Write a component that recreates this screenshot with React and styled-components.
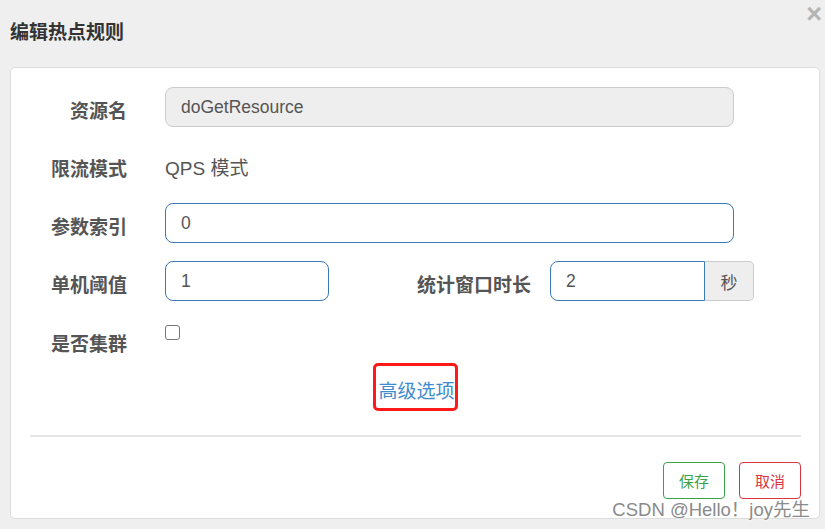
import React from "react"
import styled, { createGlobalStyle } from "styled-components"

const GlobalStyle = createGlobalStyle`
  html, body {
    margin: 0;
    padding: 0;
    background: #efefef;
  }
  body {
    font-family: "Liberation Sans", "Noto Sans CJK SC", sans-serif;
    color: #555;
  }
`

const Page = styled.div`
  position: relative;
  width: 825px;
  height: 529px;
  box-sizing: border-box;
  padding: 0 3px 0 10px;
  overflow: hidden;
`

const Header = styled.div`
  height: 67px;
  display: flex;
  align-items: center;
  justify-content: space-between;
`

const Title = styled.h4`
  margin: 0 0 6px;
  font-size: 19px;
  font-weight: 700;
  color: #333;
`

const Close = styled.span`
  align-self: flex-start;
  margin-top: 0;
  font-size: 27px;
  line-height: 28px;
  font-weight: 700;
  color: #b5b5b5;
`

const Card = styled.div`
  width: 810px;
  height: 452px;
  box-sizing: border-box;
  background: #fff;
  border: 1px solid #dcdcdc;
  border-radius: 5px;
  padding: 19px 18px 0 0;
`

const Row = styled.div`
  display: flex;
  align-items: ${p => (p.top ? "flex-start" : "center")};
  height: 40px;
  margin-bottom: 18px;
`

const Label = styled.label`
  width: ${p => p.width || 116}px;
  flex-shrink: 0;
  text-align: right;
  font-size: 19px;
  font-weight: 700;
  color: #555;
  padding-top: ${p => p.offset || 4}px;
  margin-right: ${p => p.gap || 38}px;
`

const Input = styled.input`
  width: ${p => p.width}px;
  height: 40px;
  box-sizing: border-box;
  padding: 0 15px;
  font-family: inherit;
  font-size: 17.5px;
  color: #555;
  background: ${p => (p.disabled ? "#eeeeee" : "#fff")};
  border: 1px solid ${p => (p.disabled ? "#cccccc" : "#3a7ab8")};
  border-radius: ${p => (p.joined ? "8px 0 0 8px" : "8px")};
  outline: none;
`

const StaticText = styled.span`
  font-size: 19px;
  color: #555;
  padding-top: 2px;
`

const Group = styled.div`
  display: flex;
`

const Addon = styled.span`
  width: 49px;
  height: 40px;
  box-sizing: border-box;
  display: flex;
  align-items: center;
  justify-content: center;
  font-size: 17px;
  color: #555;
  background: #eeeeee;
  border: 1px solid #cccccc;
  border-left: none;
  border-radius: 0 5px 5px 0;
`

const Checkbox = styled.span`
  width: 13px;
  height: 13px;
  margin-top: 6px;
  border: 1px solid #767676;
  border-radius: 3px;
  background: #fff;
`

const Advanced = styled.div`
  display: flex;
  justify-content: center;
  margin-top: -14px;
  padding-left: 19px;
`

const Highlight = styled.span`
  display: inline-flex;
  align-items: center;
  height: 42px;
  padding: 0 0 0 2px;
  border: 3px solid #ff1a1a;
  border-radius: 5px;
`

const LinkText = styled.a`
  font-size: 19px;
  color: #3f8bd0;
  text-decoration: none;
  margin-top: 4px;
`

const Divider = styled.hr`
  margin: 24px 0 0 19px;
  border: none;
  border-top: 2px solid #e5e5e5;
`

const Footer = styled.div`
  display: flex;
  justify-content: flex-end;
  gap: 14px;
  margin-top: 25px;
`

const Button = styled.button`
  width: 62px;
  height: 37px;
  font-family: inherit;
  font-size: 15px;
  background: #fff;
  border-radius: 4px;
  border: 1px solid ${p => p.color};
  color: ${p => p.color};
`

const Watermark = styled.div`
  position: absolute;
  right: 15px;
  bottom: 8px;
  font-size: 18.5px;
  color: #8a8a8a;
  text-shadow: 0 0 2px #fff, 0 0 2px #fff;
`

export default function App() {
  return (
    <Page>
      <GlobalStyle />
      <Header>
        <Title>编辑热点规则</Title>
        <Close>×</Close>
      </Header>
      <Card>
        <Row>
          <Label>资源名</Label>
          <Input width={569} disabled value="doGetResource" readOnly />
        </Row>
        <Row>
          <Label>限流模式</Label>
          <StaticText>QPS 模式</StaticText>
        </Row>
        <Row>
          <Label>参数索引</Label>
          <Input width={569} value="0" readOnly />
        </Row>
        <Row>
          <Label>单机阈值</Label>
          <Input width={164} value="1" readOnly />
          <Label width={202} gap={19}>
            统计窗口时长
          </Label>
          <Group>
            <Input width={155} joined value="2" readOnly />
            <Addon>秒</Addon>
          </Group>
        </Row>
        <Row top>
          <Label offset={10}>是否集群</Label>
          <Checkbox />
        </Row>
        <Advanced>
          <Highlight>
            <LinkText href="#">高级选项</LinkText>
          </Highlight>
        </Advanced>
        <Divider />
        <Footer>
          <Button color="#3aa34a">保存</Button>
          <Button color="#d9343f">取消</Button>
        </Footer>
      </Card>
      <Watermark>CSDN @Hello！joy先生</Watermark>
    </Page>
  )
}
